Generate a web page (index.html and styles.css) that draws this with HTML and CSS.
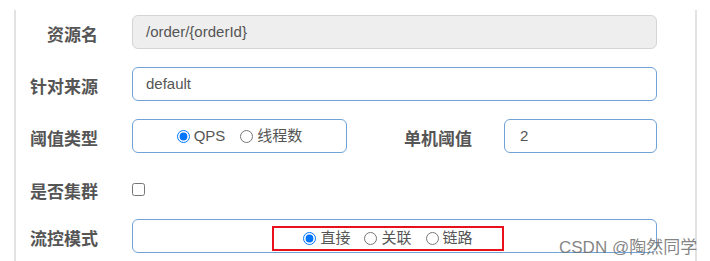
FILE: index.html
```html
<!DOCTYPE html>
<html>
<head>
<meta charset="utf-8">
<link rel="stylesheet" href="styles.css">
</head>
<body>
    <div class="panel">
        <div class="row">
            <label class="name">资源名</label>
            <div class="field readonly">/order/{orderId}</div>
        </div>

        <div class="row">
            <label class="name">针对来源</label>
            <div class="field">default</div>
        </div>

        <div class="row">
            <label class="name">阈值类型</label>
            <div class="field choice short">
                <label class="opt"><input type="radio" name="grade" checked>QPS</label>
                <label class="opt"><input type="radio" name="grade">线程数</label>
            </div>
            <label class="name wide">单机阈值</label>
            <div class="field num">2</div>
        </div>

        <div class="row check">
            <label class="name">是否集群</label>
            <input type="checkbox" class="box">
        </div>

        <div class="row">
            <label class="name">流控模式</label>
            <div class="field choice">
                <div class="mark">
                    <label class="opt"><input type="radio" name="strategy" checked>直接</label>
                    <label class="opt"><input type="radio" name="strategy">关联</label>
                    <label class="opt"><input type="radio" name="strategy">链路</label>
                </div>
            </div>
        </div>
    </div>

    <span class="watermark">CSDN @陶然同学</span>
</body>
</html>
```

FILE: styles.css
```css
body {
    margin: 0;
    background: #fff;
    font-family: "Liberation Sans", "Noto Sans CJK SC", sans-serif;
    color: #555;
}
.panel {
    margin: 10px 0 0 14px;
    width: 683px;
    height: 251px;
    box-sizing: border-box;
    border-left: 2px solid #e2e2e2;
    border-right: 2px solid #e2e2e2;
    padding-top: 5px;
    display: flex;
    flex-direction: column;
    gap: 18px;
}
.row {
    display: flex;
    align-items: center;
    height: 34px;
}
.row.check {
    height: 30px;
    padding-top: 6px;
    box-sizing: border-box;
}
.name {
    width: 82px;
    margin-right: 34px;
    text-align: right;
    font-size: 17px;
    font-weight: bold;
    color: #555;
    padding-top: 3px;
}
.name.wide {
    width: 125px;
    margin-right: 32px;
}
.field {
    width: 525px;
    height: 34px;
    box-sizing: border-box;
    border: 1px solid #6fa3d8;
    border-radius: 6px;
    padding: 0 13px;
    font-size: 15px;
    line-height: 32px;
    color: #555;
}
.readonly {
    background: #eee;
    border-color: #d4d4d4;
}
.num {
    width: 153px;
    padding-left: 15px;
}
.choice {
    display: flex;
    align-items: center;
    justify-content: center;
    gap: 15px;
    padding: 0;
}
.short {
    width: 215px;
}
.opt {
    display: flex;
    align-items: center;
    gap: 4px;
    font-size: 15px;
    color: #555;
}
.opt input {
    width: 13px;
    height: 13px;
    margin: 0;
}
.mark {
    display: flex;
    align-items: center;
    justify-content: center;
    gap: 14px;
    width: 232px;
    height: 25px;
    box-sizing: border-box;
    border: 2px solid #e8101a;
    margin: 4px 13px 0 0;
}
.box {
    width: 13px;
    height: 13px;
    margin: 0;
}
.watermark {
    position: absolute;
    left: 559px;
    top: 233px;
    font-size: 17px;
    color: rgba(110, 110, 110, 0.85);
}
```
